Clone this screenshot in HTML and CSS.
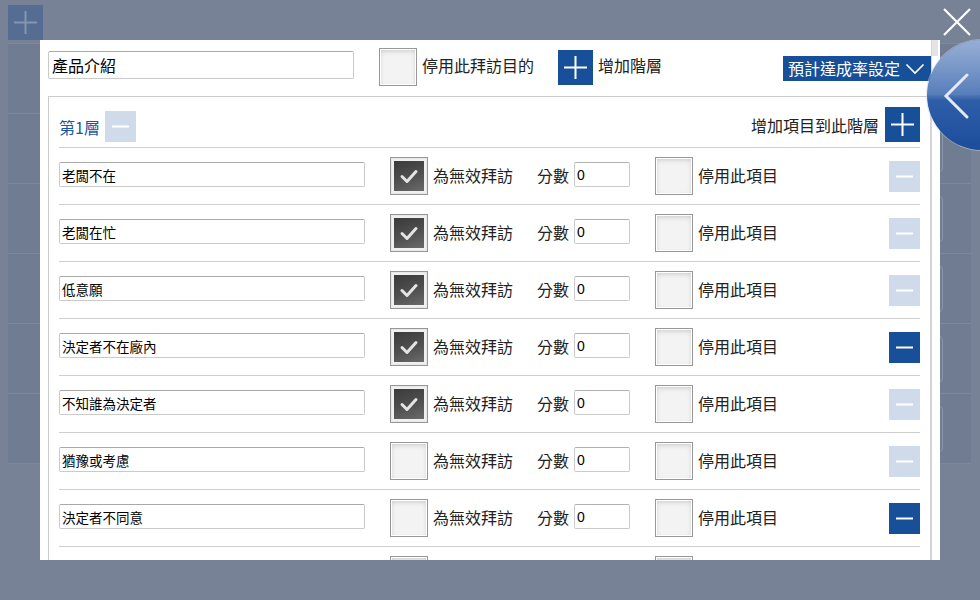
FILE: index.html
```html
<!DOCTYPE html>
<html lang="zh-Hant">
<head>
<meta charset="utf-8">
<title>產品介紹</title>
<link rel="stylesheet" href="styles.css">
</head>
<body>
<div class="page">
  <div class="page-top">
    <div class="page-add">
      <svg width="35" height="35" viewBox="0 0 35 35"><path d="M17.5 6v23M6 17.5h23" stroke="#8595b0" stroke-width="2" fill="none"/></svg>
    </div>
  </div>
  <div class="page-list">
    <div class="page-row"><div class="page-box"></div></div>
    <div class="page-row"><div class="page-box"></div></div>
    <div class="page-row"><div class="page-box"></div></div>
    <div class="page-row"><div class="page-box"></div></div>
    <div class="page-row"><div class="page-box"></div></div>
    <div class="page-row"><div class="page-box"></div></div>
  </div>
</div>

<div class="modal">
  <div class="modal-body">
    <div class="top-row">
      <input class="name-input" type="text" value="產品介紹">
      <span class="cb cb-top"></span>
      <span class="label">停用此拜訪目的</span>
      <span class="btn-add btn-add-top"><svg width="35" height="35" viewBox="0 0 35 35"><path d="M17.5 6v23M6 17.5h23" stroke="#fff" stroke-width="2" fill="none"/></svg></span>
      <span class="label">增加階層</span>
      <span class="dropdown">預計達成率設定<svg class="chev" width="20" height="12" viewBox="0 0 20 12"><path d="M1.5 1.5l8.5 8.5 8.5-8.5" stroke="#fff" stroke-width="1.6" fill="none"/></svg></span>
    </div>

    <div class="level">
      <div class="level-head">
        <div class="level-left">
          <span class="level-title">第1層</span>
          <span class="btn-minus btn-minus-light btn-minus-head"><svg width="31" height="31" viewBox="0 0 31 31"><path d="M7 15.5h17" stroke="#fff" stroke-width="2"/></svg></span>
        </div>
        <div class="level-right">
          <span class="label">增加項目到此階層</span>
          <span class="btn-add"><svg width="35" height="35" viewBox="0 0 35 35"><path d="M17.5 6v23M6 17.5h23" stroke="#fff" stroke-width="2" fill="none"/></svg></span>
        </div>
      </div>

      <div class="item">
        <input class="item-input" type="text" value="老闆不在">
        <span class="cb cb-on"><svg width="30" height="30" viewBox="0 0 30 30"><path d="M8 15.5l5 5 9-10" stroke="#e4e4e4" stroke-width="3" fill="none" stroke-linecap="round" stroke-linejoin="round"/></svg></span>
        <span class="label">為無效拜訪</span>
        <span class="label score-label">分數</span>
        <input class="score-input" type="text" value="0">
        <span class="cb cb-stop"></span>
        <span class="label">停用此項目</span>
        <span class="btn-minus btn-minus-light"><svg width="31" height="31" viewBox="0 0 31 31"><path d="M7 15.5h17" stroke="#fff" stroke-width="2"/></svg></span>
      </div>

      <div class="item">
        <input class="item-input" type="text" value="老闆在忙">
        <span class="cb cb-on"><svg width="30" height="30" viewBox="0 0 30 30"><path d="M8 15.5l5 5 9-10" stroke="#e4e4e4" stroke-width="3" fill="none" stroke-linecap="round" stroke-linejoin="round"/></svg></span>
        <span class="label">為無效拜訪</span>
        <span class="label score-label">分數</span>
        <input class="score-input" type="text" value="0">
        <span class="cb cb-stop"></span>
        <span class="label">停用此項目</span>
        <span class="btn-minus btn-minus-light"><svg width="31" height="31" viewBox="0 0 31 31"><path d="M7 15.5h17" stroke="#fff" stroke-width="2"/></svg></span>
      </div>

      <div class="item">
        <input class="item-input" type="text" value="低意願">
        <span class="cb cb-on"><svg width="30" height="30" viewBox="0 0 30 30"><path d="M8 15.5l5 5 9-10" stroke="#e4e4e4" stroke-width="3" fill="none" stroke-linecap="round" stroke-linejoin="round"/></svg></span>
        <span class="label">為無效拜訪</span>
        <span class="label score-label">分數</span>
        <input class="score-input" type="text" value="0">
        <span class="cb cb-stop"></span>
        <span class="label">停用此項目</span>
        <span class="btn-minus btn-minus-light"><svg width="31" height="31" viewBox="0 0 31 31"><path d="M7 15.5h17" stroke="#fff" stroke-width="2"/></svg></span>
      </div>

      <div class="item">
        <input class="item-input" type="text" value="決定者不在廠內">
        <span class="cb cb-on"><svg width="30" height="30" viewBox="0 0 30 30"><path d="M8 15.5l5 5 9-10" stroke="#e4e4e4" stroke-width="3" fill="none" stroke-linecap="round" stroke-linejoin="round"/></svg></span>
        <span class="label">為無效拜訪</span>
        <span class="label score-label">分數</span>
        <input class="score-input" type="text" value="0">
        <span class="cb cb-stop"></span>
        <span class="label">停用此項目</span>
        <span class="btn-minus btn-minus-dark"><svg width="31" height="31" viewBox="0 0 31 31"><path d="M7 15.5h17" stroke="#fff" stroke-width="2"/></svg></span>
      </div>

      <div class="item">
        <input class="item-input" type="text" value="不知誰為決定者">
        <span class="cb cb-on"><svg width="30" height="30" viewBox="0 0 30 30"><path d="M8 15.5l5 5 9-10" stroke="#e4e4e4" stroke-width="3" fill="none" stroke-linecap="round" stroke-linejoin="round"/></svg></span>
        <span class="label">為無效拜訪</span>
        <span class="label score-label">分數</span>
        <input class="score-input" type="text" value="0">
        <span class="cb cb-stop"></span>
        <span class="label">停用此項目</span>
        <span class="btn-minus btn-minus-light"><svg width="31" height="31" viewBox="0 0 31 31"><path d="M7 15.5h17" stroke="#fff" stroke-width="2"/></svg></span>
      </div>

      <div class="item">
        <input class="item-input" type="text" value="猶豫或考慮">
        <span class="cb"></span>
        <span class="label">為無效拜訪</span>
        <span class="label score-label">分數</span>
        <input class="score-input" type="text" value="0">
        <span class="cb cb-stop"></span>
        <span class="label">停用此項目</span>
        <span class="btn-minus btn-minus-light"><svg width="31" height="31" viewBox="0 0 31 31"><path d="M7 15.5h17" stroke="#fff" stroke-width="2"/></svg></span>
      </div>

      <div class="item">
        <input class="item-input" type="text" value="決定者不同意">
        <span class="cb"></span>
        <span class="label">為無效拜訪</span>
        <span class="label score-label">分數</span>
        <input class="score-input" type="text" value="0">
        <span class="cb cb-stop"></span>
        <span class="label">停用此項目</span>
        <span class="btn-minus btn-minus-dark"><svg width="31" height="31" viewBox="0 0 31 31"><path d="M7 15.5h17" stroke="#fff" stroke-width="2"/></svg></span>
      </div>

      <div class="item item-partial">
        <span class="input-stub"></span>
        <span class="cb"></span>
        <span class="label-stub"></span>
        <span class="cb cb-stop"></span>
        <span class="btn-minus btn-minus-dark"></span>
      </div>
    </div>
  </div>
  <div class="scrollbar"><div class="thumb"></div></div>
</div>

<div class="close-btn">
  <svg width="28" height="28" viewBox="0 0 28 28"><path d="M1 1l26 26M27 1L1 27" stroke="#fff" stroke-width="2.2" fill="none"/></svg>
</div>

<div class="side-circle">
  <svg width="110" height="110" viewBox="0 0 110 110"><path d="M40 35L19 56l21 21" stroke="#e3eaf5" stroke-width="3" fill="none" stroke-linecap="round"/></svg>
</div>
</body>
</html>
```

FILE: styles.css
```css
* { box-sizing: border-box; }

html, body {
  margin: 0;
  padding: 0;
  width: 980px;
  height: 600px;
  overflow: hidden;
  background: #778296;
  font-family: "Noto Sans CJK TC", "Noto Sans", sans-serif;
}

/* underlying (dimmed) page */
.page {
  padding: 5px 9px 0 8px;
}
.page-top {
  display: flex;
  height: 35px;
}
.page-add {
  width: 35px;
  height: 35px;
  background: #566d93;
}
.page-add svg { display: block; }
.page-list {
  margin-top: 3px;
  width: 963px;
  background: #707c91;
  border-top: 1px solid #7d889c;
}
.page-row {
  height: 70px;
  border-bottom: 1px solid #7d889c;
  display: flex;
  align-items: center;
  justify-content: flex-end;
  padding-right: 28px;
}
.page-box {
  width: 60px;
  height: 46px;
  border: 1px solid #8a95a8;
  border-radius: 4px;
}

/* modal */
.modal {
  position: fixed;
  left: 40px;
  top: 40px;
  width: 900px;
  height: 520px;
  background: #fff;
  display: flex;
  overflow: hidden;
}
.modal-body {
  width: 891px;
  padding-left: 8px;
  flex: none;
}
.scrollbar {
  width: 9px;
  border-left: 1px solid #d6d6d6;
  background: #fff;
}
.thumb {
  width: 6px;
  height: 16px;
  background: #e4e4e4;
}

.top-row {
  height: 56px;
  display: flex;
  align-items: flex-start;
}
.name-input {
  margin-top: 11px;
  width: 306px;
  height: 28px;
  border: 1px solid #c9c9c9;
  border-top-color: #a9a9a9;
  border-radius: 2px;
  padding: 0 3px;
  font-family: inherit;
  font-size: 16px;
  color: #000;
  outline: none;
}
.label {
  font-size: 16px;
  color: #222;
  white-space: nowrap;
  line-height: 22px;
  margin-left: 5px;
}
.top-row .label { margin-top: 14px; }
.cb {
  flex: none;
  width: 38px;
  height: 38px;
  border: 1px solid #979797;
  background: #f3f3f3;
  box-shadow: inset 0 0 0 1px #fff, inset 0 2px 5px #c8c8c8;
  display: flex;
  align-items: center;
  justify-content: center;
  margin-left: 25px;
}
.cb-top { margin-top: 8px; }
.cb-on {
  background: #f0f0f0;
  box-shadow: inset 0 0 0 1px #e8e8e8;
  padding: 3px;
}
.cb-on svg {
  display: block;
  width: 30px;
  height: 30px;
  background: linear-gradient(160deg, #3a3a3a 0%, #505050 55%, #6a6a6a 100%);
}
.btn-add {
  flex: none;
  width: 35px;
  height: 35px;
  background: #174f98;
}
.btn-add svg { display: block; }
.btn-add-top {
  margin-top: 10px;
  margin-left: 24px;
}
.dropdown {
  margin-left: auto;
  margin-top: 16px;
  height: 25px;
  background: #174f98;
  color: #fff;
  font-size: 16px;
  line-height: 25px;
  padding: 0 6px 0 5px;
  display: flex;
  align-items: center;
  white-space: nowrap;
}
.chev { margin-left: 5px; }

/* level panel */
.level {
  width: 883px;
  border: 1px solid #cccccc;
  border-right-color: #d3d3d3;
  padding: 0 10px;
}
.level-head {
  height: 51px;
  border-bottom: 1px solid #cfcfcf;
  display: flex;
  align-items: flex-end;
  justify-content: space-between;
  padding-bottom: 5px;
}
.level-left {
  display: flex;
  align-items: center;
}
.level-title {
  font-size: 16px;
  color: #1a58a6;
  line-height: 22px;
  margin-top: 1px;
}
.btn-minus {
  flex: none;
  width: 31px;
  height: 31px;
}
.btn-minus svg { display: block; }
.btn-minus-head { margin-left: 5px; }
.btn-minus-light { background: #cfdbea; }
.btn-minus-dark { background: #174f98; }
.level-right {
  display: flex;
  align-items: center;
}
.level-right .label { margin-right: 6px; }

.item {
  height: 57px;
  border-bottom: 1px solid #cfcfcf;
  display: flex;
  align-items: center;
}
.item .label { margin-bottom: 3px; }
.item-input {
  width: 306px;
  height: 25px;
  margin-bottom: 3px;
  border: 1px solid #cacaca;
  border-top-color: #a8a8a8;
  border-radius: 2px;
  padding: 0 2px;
  font-family: inherit;
  font-size: 13.5px;
  color: #000;
  outline: none;
}
.item .cb { margin-left: 25px; margin-bottom: 1px; }
.score-label { margin-left: 24px; }
.score-input {
  width: 56px;
  height: 25px;
  margin-left: 5px;
  margin-bottom: 3px;
  border: 1px solid #cacaca;
  border-top-color: #b0b0b0;
  border-radius: 2px;
  padding: 0 2px;
  font-family: "Liberation Sans", Arial, sans-serif;
  font-size: 14px;
  color: #000;
  outline: none;
}
.item .btn-minus { margin-left: auto; }

/* last row, cut off by the modal's lower edge */
.input-stub {
  width: 306px;
  height: 25px;
  margin-bottom: 3px;
  border: 1px solid #cacaca;
  border-top-color: #a8a8a8;
  border-radius: 2px;
}
.label-stub {
  flex: none;
  width: 202px;
  height: 1px;
}

/* overlay controls */
.close-btn {
  position: fixed;
  left: 943px;
  top: 8px;
  width: 28px;
  height: 28px;
}
.close-btn svg { display: block; }
.side-circle {
  position: fixed;
  left: 927px;
  top: 40px;
  width: 110px;
  height: 110px;
  border-radius: 50%;
  background:
    linear-gradient(to bottom, rgba(255,255,255,0.18) 0%, rgba(255,255,255,0.05) 50%, rgba(0,0,0,0) 50%),
    linear-gradient(to bottom, #7f9dcc 0%, #4f76b7 50%, #2f5ea8 55%, #1b4d9c 100%);
  box-shadow: 0 0 0 1px rgba(200,212,232,0.5);
}
.side-circle svg { display: block; }
```
